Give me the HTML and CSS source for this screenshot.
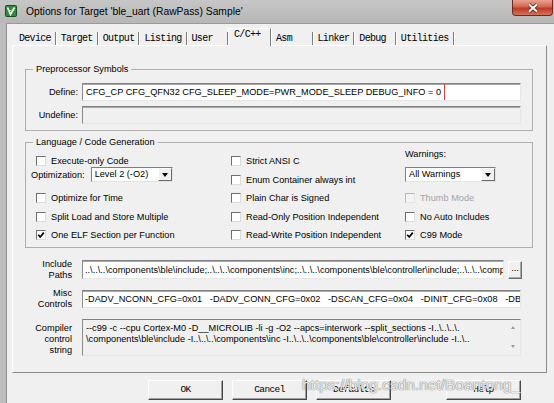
FILE: index.html
```html
<!DOCTYPE html>
<html lang="en">
<head>
  <meta charset="UTF-8">
  <meta name="viewport" content="width=device-width, initial-scale=1.0">
  <title>Options for Target</title>
  <link rel="stylesheet" href="styles.css">
</head>
<body>
  <div class="window">
    <div class="titlebar">
      <svg class="app-icon" viewBox="0 0 12 12">
        <rect x="0.5" y="0.5" width="11" height="11" rx="1" fill="#2f8a3a" stroke="#174f1e"/>
        <path d="M2.5 2.5 L5.5 9.5 L9.5 2.5" fill="none" stroke="#fff" stroke-width="1.6"/>
        <path d="M3 5.5 L8.5 5.5" stroke="#bfe6c0" stroke-width="0.8"/>
      </svg>
      <span class="title">Options for Target 'ble_uart (RawPass) Sample'</span>
      <div class="close">
        <svg viewBox="0 0 12 10" width="12" height="10">
          <path d="M2 1.5 L10 8.5 M10 1.5 L2 8.5" stroke="#5a1f16" stroke-width="3.6"/>
          <path d="M2 1.5 L10 8.5 M10 1.5 L2 8.5" stroke="#fff" stroke-width="2"/>
        </svg>
      </div>
    </div>

    <div class="client">
      <div class="tabs">
        <span class="tab">Device</span>
        <span class="tab">Target</span>
        <span class="tab">Output</span>
        <span class="tab">Listing</span>
        <span class="tab">User</span>
        <span class="tab active">C/C++</span>
        <span class="tab">Asm</span>
        <span class="tab">Linker</span>
        <span class="tab">Debug</span>
        <span class="tab">Utilities</span>
      </div>

      <div class="panel">
        <!-- Preprocessor -->
        <fieldset class="group">
          <legend>Preprocessor Symbols</legend>
          <div class="pre-body">
            <div class="field-row">
              <label>Define:</label>
              <div class="edit"><span class="mark">CFG_CP CFG_QFN32 CFG_SLEEP_MODE=PWR_MODE_SLEEP DEBUG_INFO = 0</span></div>
            </div>
            <div class="field-row">
              <label>Undefine:</label>
              <div class="edit disabled"></div>
            </div>
          </div>
        </fieldset>

        <!-- Language / Code Generation -->
        <fieldset class="group lang">
          <legend>Language / Code Generation</legend>
          <div class="lang-grid">
            <div class="col col-1">
              <span class="check first"><i class="box"></i>Execute-only Code</span>
              <div class="opt-row">
                <span>Optimization:</span>
                <div class="combo level"><span class="val">Level 2 (-O2)</span><span class="drop"><i></i></span></div>
              </div>
              <span class="check after-combo"><i class="box"></i>Optimize for Time</span>
              <span class="check"><i class="box"></i>Split Load and Store Multiple</span>
              <span class="check"><i class="box on"><svg viewBox="0 0 8 8"><path d="M1.2 3.8 L3.2 6 L6.8 1.6" fill="none" stroke="#000" stroke-width="1.7"/></svg></i>One ELF Section per Function</span>
            </div>
            <div class="col col-2">
              <span class="check"><i class="box"></i>Strict ANSI C</span>
              <span class="check"><i class="box"></i>Enum Container always int</span>
              <span class="check"><i class="box"></i>Plain Char is Signed</span>
              <span class="check"><i class="box"></i>Read-Only Position Independent</span>
              <span class="check"><i class="box"></i>Read-Write Position Independent</span>
            </div>
            <div class="col col-3">
              <span class="warn-label">Warnings:</span>
              <div class="combo warnings"><span class="val">All Warnings</span><span class="drop"><i></i></span></div>
              <span class="check off after-combo"><i class="box"></i>Thumb Mode</span>
              <span class="check"><i class="box"></i>No Auto Includes</span>
              <span class="check"><i class="box on"><svg viewBox="0 0 8 8"><path d="M1.2 3.8 L3.2 6 L6.8 1.6" fill="none" stroke="#000" stroke-width="1.7"/></svg></i>C99 Mode</span>
            </div>
          </div>
        </fieldset>

        <!-- Paths and controls -->
        <div class="paths">
          <div class="prow">
            <label>Include<br>Paths</label>
            <div class="edit include">..\..\..\components\ble\include;..\..\..\components\inc;..\..\..\components\ble\controller\include;..\..\..\components\driver</div>
            <span class="browse">...</span>
          </div>
          <div class="prow misc">
            <label>Misc<br>Controls</label>
            <div class="edit wide">-DADV_NCONN_CFG=0x01   -DADV_CONN_CFG=0x02   -DSCAN_CFG=0x04   -DINIT_CFG=0x08   -DBROADCASTER_CFG=0x01</div>
          </div>
          <div class="prow compiler">
            <label>Compiler<br>control<br>string</label>
            <div class="memo">
              <div class="memo-text">--c99 -c --cpu Cortex-M0 -D__MICROLIB -li -g -O2 --apcs=interwork --split_sections -I..\..\..\.
\components\ble\include -I..\..\..\components\inc -I..\..\..\components\ble\controller\include -I..\..</div>
              <div class="sbar"><i class="up"></i><i class="down"></i></div>
            </div>
          </div>
        </div>
      </div>

      <div class="buttons">
        <span class="btn">OK</span>
        <span class="btn">Cancel</span>
        <span class="btn">Defaults</span>
        <span class="btn help">Help</span>
      </div>
    </div>
  </div>

  <div class="watermark">https://blog.csdn.net/Boantong_</div>
</body>
</html>
```

FILE: styles.css
```css
body {
  margin: 0;
  width: 554px;
  height: 403px;
  overflow: hidden;
  position: relative;
  background-color: #bebebe;
  font-family: "Liberation Sans", Arial, sans-serif;
  font-size: 9.2px;
  color: #000;
}

.window {
  display: flex;
  flex-direction: column;
  height: 403px;
}

/* Title bar */
.titlebar {
  height: 23px;
  flex: none;
  display: flex;
  align-items: flex-start;
  background: linear-gradient(#c6c6c6, #b7b7b7);
}

.app-icon {
  width: 12px;
  height: 12px;
  margin: 5px 0 0 5px;
}

.title {
  margin: 4px 0 0 9px;
  font-size: 10.3px;
  line-height: 15px;
}

.close {
  margin-left: auto;
  margin-right: 1px;
  width: 41px;
  height: 16px;
  box-sizing: border-box;
  border: 1px solid #6e2a1f;
  border-top: none;
  border-radius: 0 0 4px 4px;
  background: linear-gradient(#e8a191, #d2674f 45%, #bd3b24 55%, #d5735a);
  display: flex;
  align-items: center;
  justify-content: center;
}

/* Dialog client area */
.client {
  flex: 1;
  margin-left: 6px;
  border-left: 1px solid #8e8e8e;
  border-top: 1px solid #9a9a9a;
  background-color: #f0f0f0;
  padding: 4px 0 0 5px;
}

.tabs {
  display: flex;
  align-items: flex-start;
  height: 17px;
  padding-left: 2px;
}

.tab {
  margin-top: 4px;
  height: 13px;
  min-width: 41.5px;
  box-sizing: border-box;
  padding: 0 4px 0 5px;
  border-right: 1px solid #7d7d7d;
  box-shadow: 1px 0 0 #fff;
  font: 10px/13px "Liberation Mono", "Courier New", monospace;
  letter-spacing: -0.7px;
  white-space: nowrap;
}

.tab.active {
  position: relative;
  z-index: 1;
  margin-top: 0;
  height: 18px;
  min-width: 43px;
  padding-top: 1px;
  line-height: 10px;
  background-color: #f0f0f0;
  border-top: 1px solid #fff;
  border-left: 1px solid #fff;
}

.panel {
  width: 535px;
  height: 328px;
  box-sizing: border-box;
  border: 1px solid;
  border-color: #fff #8a8a8a #8a8a8a #fff;
  padding: 17.5px 13px 0 12px;
}

/* Group boxes */
.group {
  margin: 0;
  padding: 0;
  min-width: 0;
  border: 1px solid #afafaf;
}

.group legend {
  margin-left: 7px;
  padding: 0 3px;
  line-height: 11px;
}

.group.lang {
  margin-top: 5.5px;
}

.pre-body {
  display: flex;
  flex-direction: column;
  gap: 5px;
  padding: 8.5px 11px 6px 0;
}

.field-row {
  display: flex;
  align-items: center;
}

.field-row label {
  width: 52px;
  margin-right: 4px;
  text-align: right;
}

.edit {
  flex: 1;
  height: 18px;
  box-sizing: border-box;
  border: 1px solid;
  border-color: #828282 #e6e6e6 #e6e6e6 #8c8c8c;
  box-shadow: inset 0 1px 0 #a8a8a8;
  background-color: #fff;
  display: flex;
  align-items: center;
  padding-left: 2px;
  white-space: pre;
  overflow: hidden;
}

.edit.disabled {
  background-color: #f0f0f0;
}

.field-row .edit {
  padding-left: 0;
}

.mark {
  align-self: stretch;
  display: flex;
  align-items: center;
  margin: -1px 0 -1px -1px;
  padding: 0 3px 0 3px;
  border: 1.5px solid #e23a3a;
}

/* Language / code generation */
.lang-grid {
  display: grid;
  grid-template-columns: 200px 174px 1fr;
  padding: 4.5px 0 2.5px 5px;
}

.col {
  display: flex;
  flex-direction: column;
}

.check {
  display: flex;
  align-items: center;
  gap: 5px;
  height: 18.5px;
  white-space: nowrap;
}

.col-1 .check {
  padding-left: 5px;
}

.col-1 .check.first {
  height: 18px;
}

.check.after-combo {
  margin-top: 7px;
}

.box {
  width: 10px;
  height: 10px;
  box-sizing: border-box;
  border: 1px solid;
  border-color: #6f6f6f #dcdcdc #dcdcdc #6f6f6f;
  background-color: #fff;
  display: flex;
  align-items: center;
  justify-content: center;
}

.box svg {
  width: 8px;
  height: 8px;
}

.check.off {
  color: #a3a3a3;
}

.check.off .box {
  border-color: #b9b9b9 #e4e4e4 #e4e4e4 #b9b9b9;
  background-color: #f3f3f3;
}

.opt-row {
  display: flex;
  align-items: center;
  gap: 6px;
  height: 15px;
  margin-top: -3px;
}

.combo {
  height: 15px;
  box-sizing: border-box;
  border: 1px solid;
  border-color: #7f7f7f #e3e3e3 #e3e3e3 #7f7f7f;
  background-color: #fff;
  display: flex;
}

.combo.level {
  width: 82px;
}

.combo.warnings {
  width: 91px;
  margin-top: 7px;
}

.combo .val {
  flex: 1;
  padding-left: 3px;
  line-height: 13px;
  white-space: nowrap;
}

.combo .drop {
  width: 14px;
  box-sizing: border-box;
  border: 1px solid;
  border-color: #fff #6c6c6c #6c6c6c #fff;
  background-color: #f0f0f0;
  display: flex;
  align-items: center;
  justify-content: center;
}

.combo .drop i {
  border-left: 3.5px solid transparent;
  border-right: 3.5px solid transparent;
  border-top: 4px solid #000;
}

.warn-label {
  line-height: 11px;
  margin-top: -3px;
}

/* Include paths, misc controls, compiler string */
.paths {
  margin-top: 11px;
  display: flex;
  flex-direction: column;
}

.prow {
  display: flex;
  align-items: center;
}

.prow label {
  width: 47px;
  margin-right: 10px;
  text-align: right;
  line-height: 10.5px;
  flex: none;
}

.prow .edit {
  flex: none;
}

.edit.include {
  width: 422px;
  height: 19px;
}

.browse {
  width: 14px;
  height: 18px;
  margin-left: 4px;
  box-sizing: border-box;
  border: 1px solid;
  border-color: #fff #6c6c6c #6c6c6c #fff;
  box-shadow: inset -1px -1px 0 #a8a8a8;
  text-align: center;
  line-height: 13px;
}

.prow.misc {
  margin-top: 8px;
}

.edit.wide {
  width: 439px;
}

.prow.compiler {
  margin-top: 10px;
}

.prow.compiler label {
  line-height: 11px;
  margin-top: 3px;
}

.memo {
  width: 439px;
  height: 37px;
  box-sizing: border-box;
  border: 1px solid;
  border-color: #828282 #e6e6e6 #e6e6e6 #8c8c8c;
  background-color: #f0f0f0;
  display: flex;
}

.memo-text {
  flex: 1;
  overflow: hidden;
  white-space: pre;
  padding: 3px 0 0 3px;
  line-height: 10.5px;
}

.sbar {
  width: 14px;
  display: flex;
  flex-direction: column;
  justify-content: space-between;
  align-items: center;
  padding: 6px 0 7px;
  box-sizing: border-box;
}

.sbar i {
  border-left: 2.5px solid transparent;
  border-right: 2.5px solid transparent;
}

.sbar .up {
  border-bottom: 3px solid #9a9a9a;
}

.sbar .down {
  border-top: 3px solid #9a9a9a;
}

/* Dialog buttons */
.buttons {
  display: flex;
  gap: 9px;
  margin-top: 7px;
  padding-left: 136px;
}

.btn {
  width: 75px;
  height: 20px;
  box-sizing: border-box;
  border: 1px solid;
  border-color: #fdfdfd #474747 #474747 #fdfdfd;
  box-shadow: inset -1px -1px 0 #a0a0a0;
  text-align: center;
  font: 9.5px/18px "Liberation Mono", "Courier New", monospace;
  letter-spacing: -0.6px;
}

.btn.help {
  margin-left: 46px;
}

.watermark {
  position: absolute;
  left: 302px;
  top: 376px;
  font-size: 15.5px;
  color: rgba(255, 255, 255, 0.85);
  text-shadow: 0 0 1px #7a7a7a, 0 0 1px #7a7a7a;
  white-space: nowrap;
}
```
